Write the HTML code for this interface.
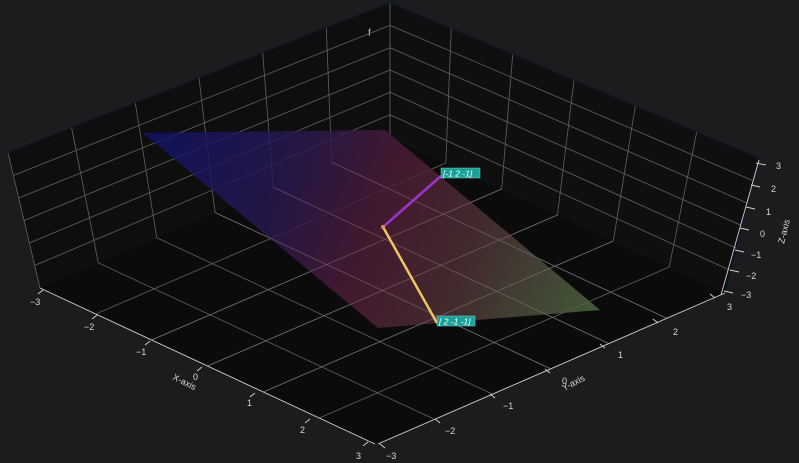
<!DOCTYPE html>
<html><head><meta charset="utf-8"><style>
html,body{margin:0;padding:0;background:#1c1c1f;}
svg{display:block;}
text{font-family:"Liberation Sans","DejaVu Sans",sans-serif;fill:#d8d8d8;font-size:9px;}
</style></head><body>
<svg width="799" height="463" viewBox="0 0 799 463" xmlns="http://www.w3.org/2000/svg">
<defs>
<linearGradient id="pg" gradientUnits="userSpaceOnUse" x1="150" y1="135" x2="600" y2="310">
<stop offset="0" stop-color="#101468"/>
<stop offset="0.3" stop-color="#2a1850"/>
<stop offset="0.5" stop-color="#4e1c36"/>
<stop offset="0.7" stop-color="#4e3034"/>
<stop offset="1" stop-color="#4e6a44"/>
</linearGradient>
</defs>
<rect width="799" height="463" fill="#1c1c1f"/>
<polygon points="40,288 8,153 390,3 390,137" fill="#0e0e0e" stroke="#0a1420" stroke-width="1.5"/>
<polygon points="390,137 390,3 758,158 725,293" fill="#0f0f0f" stroke="#0a1420" stroke-width="1.5"/>
<polygon points="40,288 390,137 725,293 375,444" fill="#0b0b0b"/>
<g stroke="#626262" stroke-width="0.8" fill="none">
<line x1="40" y1="288" x2="8" y2="153"/>
<line x1="98.3" y1="262.8" x2="71.7" y2="128"/>
<line x1="156.7" y1="237.7" x2="135.3" y2="103"/>
<line x1="215" y1="212.5" x2="199" y2="78"/>
<line x1="273.3" y1="187.3" x2="262.7" y2="53"/>
<line x1="331.7" y1="162.2" x2="326.3" y2="28"/>
<line x1="390" y1="137" x2="390" y2="3"/>
<line x1="34.7" y1="265.5" x2="390" y2="114.7"/>
<line x1="29.3" y1="243" x2="390" y2="92.3"/>
<line x1="24" y1="220.5" x2="390" y2="70"/>
<line x1="18.7" y1="198" x2="390" y2="47.7"/>
<line x1="13.3" y1="175.5" x2="390" y2="25.3"/>
<line x1="445.8" y1="163" x2="451.3" y2="28.8"/>
<line x1="501.7" y1="189" x2="512.7" y2="54.7"/>
<line x1="557.5" y1="215" x2="574" y2="80.5"/>
<line x1="613.3" y1="241" x2="635.3" y2="106.3"/>
<line x1="669.2" y1="267" x2="696.7" y2="132.2"/>
<line x1="390" y1="114.7" x2="730.5" y2="270.5"/>
<line x1="390" y1="92.3" x2="736" y2="248"/>
<line x1="390" y1="70" x2="741.5" y2="225.5"/>
<line x1="390" y1="47.7" x2="747" y2="203"/>
<line x1="390" y1="25.3" x2="752.5" y2="180.5"/>
<line x1="95.8" y1="314" x2="445.8" y2="163"/>
<line x1="151.7" y1="340" x2="501.7" y2="189"/>
<line x1="207.5" y1="366" x2="557.5" y2="215"/>
<line x1="263.3" y1="392" x2="613.3" y2="241"/>
<line x1="319.2" y1="418" x2="669.2" y2="267"/>
<line x1="98.3" y1="262.8" x2="433.3" y2="418.8"/>
<line x1="156.7" y1="237.7" x2="491.7" y2="393.7"/>
<line x1="215" y1="212.5" x2="550" y2="368.5"/>
<line x1="273.3" y1="187.3" x2="608.3" y2="343.3"/>
<line x1="331.7" y1="162.2" x2="666.7" y2="318.2"/>
</g>
<polygon points="143,133 385,130 600,310 378,328" fill="url(#pg)" opacity="0.82"/>
<g stroke="#8a7a7a" stroke-width="0.7" opacity="0.55">
<line x1="331.7" y1="162.2" x2="666.7" y2="318.2"/>
<line x1="273.3" y1="187.3" x2="608.3" y2="343.3"/>
<line x1="215" y1="212.5" x2="550" y2="368.5"/>
<line x1="207.5" y1="366" x2="557.5" y2="215"/>
<line x1="263.3" y1="392" x2="613.3" y2="241"/>
<line x1="151.7" y1="340" x2="501.7" y2="189"/>
</g>
<line x1="383" y1="227" x2="441" y2="176" stroke="#9a35cc" stroke-width="2.5"/>
<line x1="383" y1="227" x2="437" y2="323" stroke="#f0c466" stroke-width="2.5"/>
<circle cx="383" cy="227" r="2" fill="#f08a50"/>
<rect x="441" y="168" width="39" height="10" fill="#1aa29a" stroke="#7ad0c8" stroke-width="0.5"/>
<text x="443" y="176.5" style="font-size:8.5px;font-style:italic;fill:#fff">[-1  2 -1]</text>
<rect x="437" y="316" width="38" height="10" fill="#1aa29a" stroke="#7ad0c8" stroke-width="0.5"/>
<text x="439" y="324.5" style="font-size:8.5px;font-style:italic;fill:#fff">[ 2 -1 -1]</text>
<g stroke="#d0d0d0" stroke-width="0.9">
<line x1="40" y1="288" x2="375" y2="444"/>
<line x1="378" y1="444" x2="725" y2="293"/>
<line x1="721" y1="295" x2="759" y2="160"/>
<line x1="43" y1="290" x2="38" y2="294"/>
<line x1="97" y1="315" x2="92" y2="319"/>
<line x1="150" y1="341" x2="145" y2="345"/>
<line x1="202" y1="367" x2="197" y2="371"/>
<line x1="255" y1="393" x2="250" y2="397"/>
<line x1="310" y1="419" x2="305" y2="423"/>
<line x1="368" y1="442" x2="363" y2="446"/>
<line x1="380" y1="444" x2="385" y2="448"/>
<line x1="435" y1="419" x2="440" y2="423"/>
<line x1="490" y1="394" x2="495" y2="398"/>
<line x1="545" y1="369" x2="550" y2="373"/>
<line x1="600" y1="344" x2="605" y2="348"/>
<line x1="653" y1="319" x2="658" y2="323"/>
<line x1="710" y1="294" x2="715" y2="298"/>
<line x1="756" y1="163" x2="766" y2="165"/>
<line x1="751" y1="185" x2="760" y2="187"/>
<line x1="746" y1="207" x2="755" y2="209"/>
<line x1="740" y1="228" x2="749" y2="230"/>
<line x1="735" y1="250" x2="744" y2="252"/>
<line x1="730" y1="270" x2="739" y2="272"/>
<line x1="724" y1="291" x2="733" y2="293"/>
</g>
<g>
<text x="30" y="305">−3</text>
<text x="84" y="330">−2</text>
<text x="136" y="355">−1</text>
<text x="193" y="380">0</text>
<text x="247" y="406">1</text>
<text x="300" y="433">2</text>
<text x="356" y="459">3</text>
<text x="386" y="459">−3</text>
<text x="445" y="434">−2</text>
<text x="503" y="409">−1</text>
<text x="562" y="384">0</text>
<text x="618" y="358">1</text>
<text x="673" y="335">2</text>
<text x="727" y="310">3</text>
<text x="776" y="169">3</text>
<text x="771" y="192">2</text>
<text x="766" y="215">1</text>
<text x="760" y="237">0</text>
<text x="751" y="258">−1</text>
<text x="746" y="279">−2</text>
<text x="741" y="298">−3</text>
</g>
<text transform="translate(172,379) rotate(27)">X-axis</text>
<text transform="translate(564,391) rotate(-27)">Y-axis</text>
<text transform="translate(784,244) rotate(-76)">Z-axis</text>
<text x="368" y="36" style="font-size:10px;fill:#bbb">f</text>
</svg>
</body></html>
